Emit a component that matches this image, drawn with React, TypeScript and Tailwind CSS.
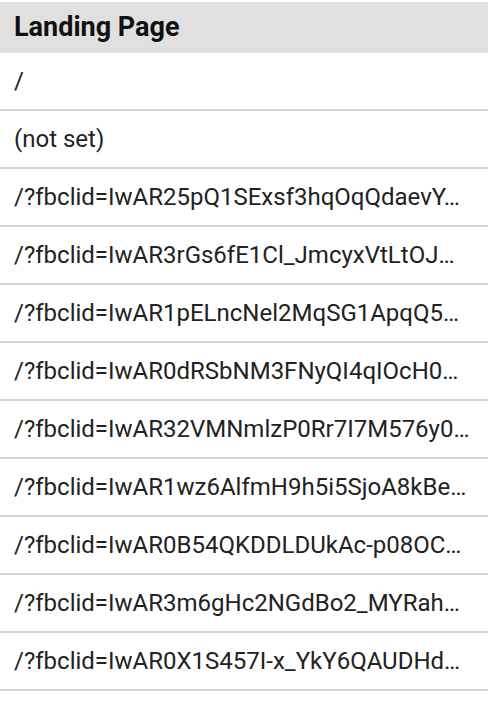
import React from "react";

const rows = [
  "/",
  "(not set)",
  "/?fbclid=IwAR25pQ1SExsf3hqOqQdaevY…",
  "/?fbclid=IwAR3rGs6fE1Cl_JmcyxVtLtOJ…",
  "/?fbclid=IwAR1pELncNel2MqSG1ApqQ5…",
  "/?fbclid=IwAR0dRSbNM3FNyQI4qIOcH0…",
  "/?fbclid=IwAR32VMNmlzP0Rr7I7M576y0…",
  "/?fbclid=IwAR1wz6AlfmH9h5i5SjoA8kBe…",
  "/?fbclid=IwAR0B54QKDDLDUkAc-p08OC…",
  "/?fbclid=IwAR3m6gHc2NGdBo2_MYRah…",
  "/?fbclid=IwAR0X1S457I-x_YkY6QAUDHd…",
];

export default function App() {
  return (
    <div className="w-[488px] h-[702px] bg-white pt-[2px] overflow-hidden" style={{ fontFamily: "Roboto, 'Noto Sans', sans-serif" }}>
      <div className="h-[51px] bg-[#e0e0e0] flex items-center px-[14px]">
        <span className="text-[27px] leading-none font-bold text-[#111]">Landing Page</span>
      </div>
      {rows.map((r, i) => (
        <div key={i} className="h-[58px] border-b-2 border-[#d6d6d6] flex items-center px-[14px]">
          <span className="text-[24px] leading-[30px] text-[#222] truncate">{r}</span>
        </div>
      ))}
    </div>
  );
}
